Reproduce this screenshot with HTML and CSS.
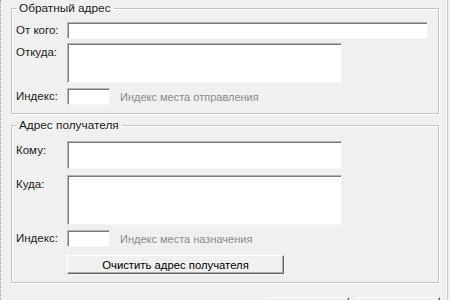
FILE: index.html
```html
<!DOCTYPE html>
<html lang="ru">
<head>
    <meta charset="UTF-8">
    <title>Адрес</title>
    <link rel="stylesheet" href="styles.css">
</head>
<body>
    <div class="dialog">
        <fieldset class="group sender">
            <legend>Обратный адрес</legend>
            <div class="row row-line">
                <label class="label">От кого:</label>
                <input class="field field-wide" type="text">
            </div>
            <div class="row row-from">
                <label class="label">Откуда:</label>
                <textarea class="field field-area"></textarea>
            </div>
            <div class="row row-line">
                <label class="label">Индекс:</label>
                <input class="field field-zip" type="text">
                <span class="hint">Индекс места отправления</span>
            </div>
        </fieldset>

        <fieldset class="group recipient">
            <legend>Адрес получателя</legend>
            <div class="row row-to">
                <label class="label">Кому:</label>
                <textarea class="field field-area"></textarea>
            </div>
            <div class="row row-where">
                <label class="label">Куда:</label>
                <textarea class="field field-area"></textarea>
            </div>
            <div class="row row-line">
                <label class="label">Индекс:</label>
                <input class="field field-zip" type="text">
                <span class="hint">Индекс места назначения</span>
            </div>
            <div class="row row-button">
                <span class="label"></span>
                <button class="btn btn-clear" type="button">Очистить адрес получателя</button>
            </div>
        </fieldset>

        <!-- кнопки окна видны только верхним краем -->
        <div class="actions">
            <button class="btn btn-action" type="button" aria-label="OK"></button>
            <button class="btn btn-action" type="button" aria-label="Отмена"></button>
        </div>
    </div>
</body>
</html>
```

FILE: styles.css
```css
* {
    margin: 0;
    padding: 0;
    box-sizing: border-box;
}

body {
    font-family: "Liberation Sans", Arial, sans-serif;
    font-size: 11px;
    color: #222;
    background: #f0f0f0;
    height: 300px;
    overflow: hidden;
}

.dialog {
    width: 448px;
    height: 300px;
    border-left: 1px dotted #9a9a9a;
    border-right: 1px solid #c8c8c8;
    box-shadow: inset -1px 0 0 #fff;
    padding-top: 2px;
    overflow: hidden;
}

.group {
    margin-left: 10px;
    width: 428px;
    border: 1px solid #c6c6c6;
    box-shadow: inset 1px 1px 0 #fff, 1px 1px 0 #fff;
    padding: 7px 8px 8px 4px;
}

.group legend {
    padding: 0 3px;
    line-height: 13px;
    font-size: 11.8px;
    color: #1a1a1a;
}

.recipient {
    margin-top: 5px;
    padding-top: 9px;
}

.row {
    display: flex;
    align-items: flex-start;
}

.label {
    width: 51px;
    flex: none;
    padding-top: 3px;
    line-height: 13px;
    font-size: 11.5px;
}

.row-line {
    height: 17px;
    align-items: center;
}

.row-line .label {
    padding-top: 0;
}

.row-from {
    height: 40px;
    margin: 4px 0 5px;
}

.row-to {
    height: 28px;
    margin-bottom: 6px;
}

.row-where {
    height: 50px;
    margin-bottom: 5px;
}

.row-button {
    height: 19px;
    margin-top: 8px;
}

.field {
    background: #fff;
    border: 1px solid;
    border-color: #b4b4b4 #f4f4f4 #f4f4f4 #b4b4b4;
    box-shadow: inset 1px 1px 0 #7a7a7a;
    font: inherit;
    height: 100%;
    outline: none;
    resize: none;
}

.field-wide {
    width: 361px;
}

.field-area {
    width: 275px;
}

.field-zip {
    width: 43px;
}

.hint {
    margin-left: 10px;
    color: #8c8c8c;
    font-size: 11px;
}

.btn {
    font: inherit;
    font-size: 11.3px;
    color: #000;
    background: #f0f0f0;
    border: 1px solid;
    border-color: #fff #6a6a6a #6a6a6a #fff;
    box-shadow: inset -1px -1px 0 #a8a8a8;
}

.btn-clear {
    width: 217px;
    height: 19px;
}

.actions {
    display: flex;
    justify-content: flex-end;
    align-items: flex-start;
    gap: 8px;
    height: 3px;
    overflow: hidden;
    margin-top: 14px;
    padding-right: 7px;
}

.btn-action {
    width: 83px;
    height: 23px;
    flex: none;
}
```
